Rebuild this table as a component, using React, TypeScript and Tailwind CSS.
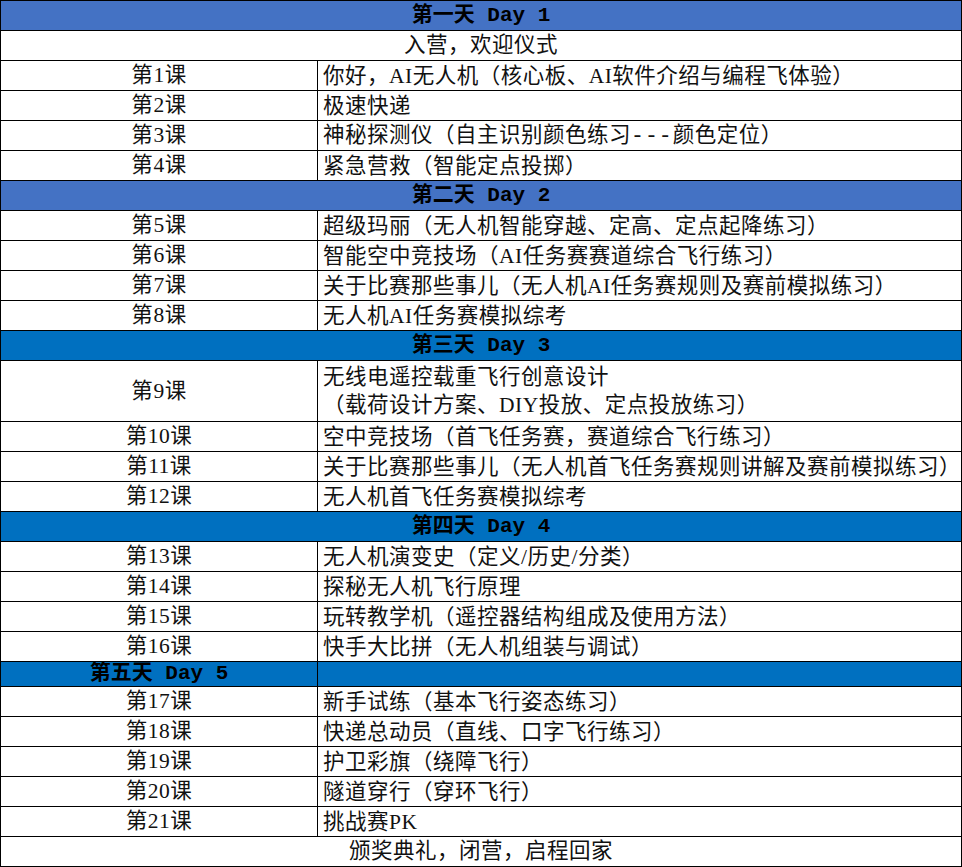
type Row =
  | { kind: 'day'; label: string; day: string; tone: 'a' | 'b'; split?: boolean; h: string }
  | { kind: 'note'; text: string; h: string; last?: boolean }
  | { kind: 'lesson'; n: number; lines: string[]; h: string };

const rows: Row[] = [
  { kind: 'day', label: '第一天', day: ' Day 1', tone: 'a', h: 'h-[30px]' },
  { kind: 'note', text: '入营，欢迎仪式', h: 'h-[30px]' },
  { kind: 'lesson', n: 1, lines: ['你好，AI无人机（核心板、AI软件介绍与编程飞体验）'], h: 'h-[30px]' },
  { kind: 'lesson', n: 2, lines: ['极速快递'], h: 'h-[30px]' },
  { kind: 'lesson', n: 3, lines: ['神秘探测仪（自主识别颜色练习---颜色定位）'], h: 'h-[30px]' },
  { kind: 'lesson', n: 4, lines: ['紧急营救（智能定点投掷）'], h: 'h-[30px]' },
  { kind: 'day', label: '第二天', day: ' Day 2', tone: 'a', h: 'h-[30px]' },
  { kind: 'lesson', n: 5, lines: ['超级玛丽（无人机智能穿越、定高、定点起降练习）'], h: 'h-[30px]' },
  { kind: 'lesson', n: 6, lines: ['智能空中竞技场（AI任务赛赛道综合飞行练习）'], h: 'h-[30px]' },
  { kind: 'lesson', n: 7, lines: ['关于比赛那些事儿（无人机AI任务赛规则及赛前模拟练习）'], h: 'h-[30px]' },
  { kind: 'lesson', n: 8, lines: ['无人机AI任务赛模拟综考'], h: 'h-[30px]' },
  { kind: 'day', label: '第三天', day: ' Day 3', tone: 'b', h: 'h-[30px]' },
  {
    kind: 'lesson',
    n: 9,
    lines: ['无线电遥控载重飞行创意设计', '（载荷设计方案、DIY投放、定点投放练习）'],
    h: 'h-[61px]',
  },
  { kind: 'lesson', n: 10, lines: ['空中竞技场（首飞任务赛，赛道综合飞行练习）'], h: 'h-[30px]' },
  { kind: 'lesson', n: 11, lines: ['关于比赛那些事儿（无人机首飞任务赛规则讲解及赛前模拟练习）'], h: 'h-[30px]' },
  { kind: 'lesson', n: 12, lines: ['无人机首飞任务赛模拟综考'], h: 'h-[30px]' },
  { kind: 'day', label: '第四天', day: ' Day 4', tone: 'b', h: 'h-[30px]' },
  { kind: 'lesson', n: 13, lines: ['无人机演变史（定义/历史/分类）'], h: 'h-[30px]' },
  { kind: 'lesson', n: 14, lines: ['探秘无人机飞行原理'], h: 'h-[30px]' },
  { kind: 'lesson', n: 15, lines: ['玩转教学机（遥控器结构组成及使用方法）'], h: 'h-[30px]' },
  { kind: 'lesson', n: 16, lines: ['快手大比拼（无人机组装与调试）'], h: 'h-[30px]' },
  { kind: 'day', label: '第五天', day: ' Day 5', tone: 'b', split: true, h: 'h-[25px]' },
  { kind: 'lesson', n: 17, lines: ['新手试练（基本飞行姿态练习）'], h: 'h-[30px]' },
  { kind: 'lesson', n: 18, lines: ['快递总动员（直线、口字飞行练习）'], h: 'h-[30px]' },
  { kind: 'lesson', n: 19, lines: ['护卫彩旗（绕障飞行）'], h: 'h-[30px]' },
  { kind: 'lesson', n: 20, lines: ['隧道穿行（穿环飞行）'], h: 'h-[30px]' },
  { kind: 'lesson', n: 21, lines: ['挑战赛PK'], h: 'h-[30px]' },
  { kind: 'note', text: '颁奖典礼，闭营，启程回家', h: 'h-[29px]', last: true },
];

const body = "font-['Liberation_Serif','Noto_Sans_CJK_SC',serif] text-[21.5px] tracking-[0.5px] text-[#111]";
const head = "font-['Liberation_Mono','Noto_Sans_CJK_SC',monospace] text-[21px] font-bold text-black";

// dashes in the sheet are drawn wider than the serif ones
function Line({ text }: { text: string }) {
  const parts = text.split('---');
  if (parts.length === 1) return <span>{text}</span>;
  return (
    <span>
      {parts[0]}
      <span className="font-['Liberation_Mono',monospace] tracking-[1px]">---</span>
      {parts[1]}
    </span>
  );
}

function DayRow({ row }: { row: Extract<Row, { kind: 'day' }> }) {
  const bg = row.tone === 'a' ? 'bg-[#4472c4]' : 'bg-[#0070c0]';
  if (row.split) {
    return (
      <div className={`flex border-b border-black ${row.h} ${bg}`}>
        <div className={`w-[317px] shrink-0 border-r border-black flex items-center justify-center whitespace-pre ${head}`}>
          {row.label}
          {row.day}
        </div>
        <div className="flex-1" />
      </div>
    );
  }
  return (
    <div className={`flex items-center justify-center border-b border-black whitespace-pre ${row.h} ${bg} ${head}`}>
      {row.label}
      {row.day}
    </div>
  );
}

export default function App() {
  return (
    <div className="w-[962px] h-[867px] bg-white">
      <div className="flex flex-col border border-black">
        {rows.map((row, i) => {
          if (row.kind === 'day') return <DayRow key={i} row={row} />;
          if (row.kind === 'note') {
            return (
              <div
                key={i}
                className={`flex items-center justify-center ${row.h} ${row.last ? '' : 'border-b border-black'} ${body}`}
              >
                {row.text}
              </div>
            );
          }
          return (
            <div key={i} className={`flex border-b border-black ${row.h} ${body}`}>
              <div className="w-[317px] shrink-0 border-r border-black flex items-center justify-center">
                第{row.n}课
              </div>
              <div className="flex-1 flex flex-col justify-center pl-[5px] leading-[28px] whitespace-nowrap">
                {row.lines.map(l => (
                  <Line key={l} text={l} />
                ))}
              </div>
            </div>
          );
        })}
      </div>
    </div>
  );
}
